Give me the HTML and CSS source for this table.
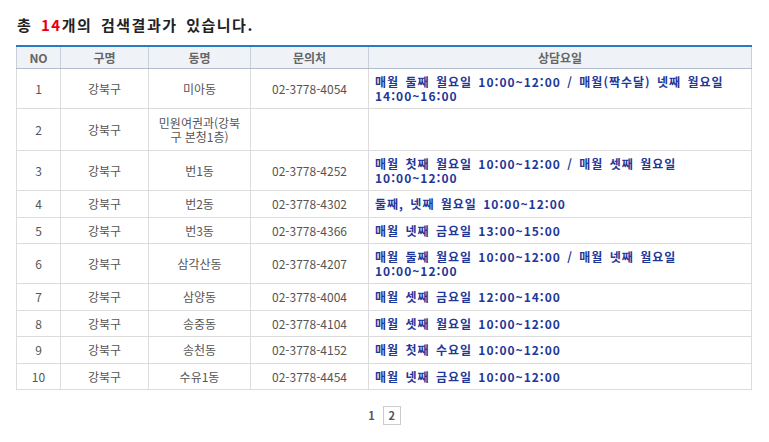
FILE: index.html
```html
<!DOCTYPE html>
<html lang="ko">
<head>
<meta charset="utf-8">
<title>검색결과</title>
<link rel="stylesheet" href="styles.css">
</head>
<body>
<div class="wrap">
  <h2 class="result-title">총 <em class="count">14</em>개의 검색결과가 있습니다.</h2>
  <table class="list">
    <colgroup>
      <col class="c-no"><col class="c-gu"><col class="c-dong"><col class="c-tel"><col class="c-day">
    </colgroup>
    <thead>
      <tr><th>NO</th><th>구명</th><th>동명</th><th>문의처</th><th>상담요일</th></tr>
    </thead>
    <tbody>
      <tr><td>1</td><td>강북구</td><td>미아동</td><td>02-3778-4054</td><td class="day">매월 둘째 월요일 10:00~12:00 / 매월(짝수달) 넷째 월요일<br>14:00~16:00</td></tr>
      <tr class="tall"><td>2</td><td>강북구</td><td>민원여권과(강북<br>구 본청1층)</td><td></td><td class="day"></td></tr>
      <tr><td>3</td><td>강북구</td><td>번1동</td><td>02-3778-4252</td><td class="day">매월 첫째 월요일 10:00~12:00 / 매월 셋째 월요일<br>10:00~12:00</td></tr>
      <tr><td>4</td><td>강북구</td><td>번2동</td><td>02-3778-4302</td><td class="day">둘째, 넷째 월요일 10:00~12:00</td></tr>
      <tr><td>5</td><td>강북구</td><td>번3동</td><td>02-3778-4366</td><td class="day">매월 넷째 금요일 13:00~15:00</td></tr>
      <tr><td>6</td><td>강북구</td><td>삼각산동</td><td>02-3778-4207</td><td class="day">매월 둘째 월요일 10:00~12:00 / 매월 넷째 월요일<br>10:00~12:00</td></tr>
      <tr><td>7</td><td>강북구</td><td>삼양동</td><td>02-3778-4004</td><td class="day">매월 셋째 금요일 12:00~14:00</td></tr>
      <tr><td>8</td><td>강북구</td><td>송중동</td><td>02-3778-4104</td><td class="day">매월 셋째 월요일 10:00~12:00</td></tr>
      <tr><td>9</td><td>강북구</td><td>송천동</td><td>02-3778-4152</td><td class="day">매월 첫째 수요일 10:00~12:00</td></tr>
      <tr><td>10</td><td>강북구</td><td>수유1동</td><td>02-3778-4454</td><td class="day">매월 넷째 금요일 10:00~12:00</td></tr>
    </tbody>
  </table>
  <div class="paging">
    <a class="page" href="#">1</a>
    <strong class="page current">2</strong>
  </div>
</div>
</body>
</html>
```
FILE: styles.css
```css
html, body {
  margin: 0;
  padding: 0;
  background: #fff;
}
body {
  font-family: "Noto Sans CJK KR", "Noto Sans", sans-serif;
  font-size: 12px;
  color: #555;
}
.wrap {
  padding: 15px 18px 0 16px;
}
.result-title {
  margin: 0 0 10px 1px;
  font-size: 15px;
  line-height: 20px;
  font-weight: bold;
  color: #222;
  letter-spacing: 1.5px;
  word-spacing: 3px;
}
.count {
  font-style: normal;
  color: #e60012;
}
.list {
  width: 735px;
  border-collapse: collapse;
  border-top: 2px solid #2b7bc3;
  table-layout: fixed;
}
.c-no { width: 44px; }
.c-gu { width: 88px; }
.c-dong { width: 102px; }
.c-tel { width: 118px; }
.c-day { width: 383px; }
.list th {
  background: #eff3f7;
  color: #666;
  font-weight: bold;
  font-size: 12px;
  line-height: 13px;
  padding: 4px 4px;
  border-left: 1px solid #c8cfda;
  border-right: 1px solid #c8cfda;
  border-bottom: 1px solid #b4bdcd;
  text-align: center;
}
.list td {
  border: 1px solid #dcdcdc;
  padding: 6px 6px;
  line-height: 13.5px;
  text-align: center;
  color: #555;
  vertical-align: middle;
}
.list tr.tall td {
  padding: 7px 4px;
}
.list td.day {
  text-align: left;
  font-weight: bold;
  color: #1f3799;
  white-space: nowrap;
  letter-spacing: 1px;
  word-spacing: 2px;
}
.paging {
  margin-top: 16px;
  display: flex;
  justify-content: center;
  align-items: center;
  gap: 8px;
  padding-left: 2px;
}
.page {
  font-size: 11px;
  font-weight: bold;
  color: #555;
  text-decoration: none;
  line-height: 17px;
}
.page.current {
  width: 16px;
  height: 17px;
  border: 1px solid #cccccc;
  text-align: center;
}
```
